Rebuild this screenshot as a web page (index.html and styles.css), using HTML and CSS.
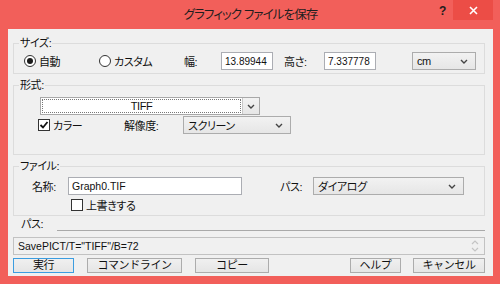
FILE: index.html
```html
<!DOCTYPE html>
<html lang="ja">
<head>
    <meta charset="UTF-8">
    <title>グラフィック ファイルを保存</title>
    <link rel="stylesheet" href="styles.css">
</head>
<body>
    <div class="window">
        <div class="titlebar">
            <div class="title-spacer"></div>
            <div class="title">グラフィック ファイルを保存</div>
            <div class="help">?</div>
            <div class="close">
                <svg width="9" height="9" viewBox="0 0 9 9"><path d="M1 1L8 8M8 1L1 8" stroke="#fff" stroke-width="1.6"/></svg>
            </div>
        </div>

        <div class="client">
            <fieldset class="group size">
                <legend>サイズ:</legend>
                <div class="row">
                    <label class="radio auto"><span class="radio-dot checked"></span>自動</label>
                    <label class="radio custom"><span class="radio-dot"></span>カスタム</label>
                    <span class="lbl lbl-w">幅:</span>
                    <input class="field num" type="text" value="13.89944">
                    <span class="lbl lbl-h">高さ:</span>
                    <input class="field num" type="text" value="7.337778">
                    <div class="combo unit"><span>cm</span><svg class="chev" width="8" height="5" viewBox="0 0 8 5"><path d="M1 1L4 4L7 1" fill="none" stroke="#444" stroke-width="1.4"/></svg></div>
                </div>
            </fieldset>

            <fieldset class="group format">
                <legend>形式:</legend>
                <div class="format-combo">
                    <div class="format-value"><span>TIFF</span></div>
                    <div class="format-btn"><svg width="8" height="5" viewBox="0 0 8 5"><path d="M1 1L4 4L7 1" fill="none" stroke="#444" stroke-width="1.4"/></svg></div>
                </div>
                <div class="row format-opts">
                    <label class="checkbox color">
                        <span class="check"><svg width="10" height="10" viewBox="0 0 10 10"><path d="M1.5 5L4 7.5L8.5 2" fill="none" stroke="#111" stroke-width="1.8"/></svg></span>カラー
                    </label>
                    <span class="lbl lbl-res">解像度:</span>
                    <div class="combo res"><span>スクリーン</span><svg class="chev" width="8" height="5" viewBox="0 0 8 5"><path d="M1 1L4 4L7 1" fill="none" stroke="#444" stroke-width="1.4"/></svg></div>
                </div>
            </fieldset>

            <fieldset class="group file">
                <legend>ファイル:</legend>
                <div class="row">
                    <span class="lbl lbl-name">名称:</span>
                    <input class="field name" type="text" value="Graph0.TIF">
                    <span class="lbl lbl-path">パス:</span>
                    <div class="combo path"><span>ダイアログ</span><svg class="chev" width="8" height="5" viewBox="0 0 8 5"><path d="M1 1L4 4L7 1" fill="none" stroke="#444" stroke-width="1.4"/></svg></div>
                </div>
                <label class="checkbox overwrite"><span class="check"></span>上書きする</label>
            </fieldset>

            <div class="path-row">
                <span class="path-label">パス:</span>
                <div class="path-line"></div>
            </div>

            <div class="cmdline">
                <span>SavePICT/T="TIFF"/B=72</span>
                <div class="spin">
                    <svg width="8" height="5" viewBox="0 0 8 5"><path d="M1 4L4 1L7 4" fill="none" stroke="#c4c4c4" stroke-width="1.2"/></svg>
                    <svg width="8" height="5" viewBox="0 0 8 5"><path d="M1 1L4 4L7 1" fill="none" stroke="#c4c4c4" stroke-width="1.2"/></svg>
                </div>
            </div>

            <div class="buttons">
                <button class="btn default">実行</button>
                <button class="btn cmd">コマンドライン</button>
                <button class="btn copy">コピー</button>
                <div class="spacer"></div>
                <button class="btn help-btn">ヘルプ</button>
                <button class="btn cancel">キャンセル</button>
            </div>
        </div>
    </div>
</body>
</html>
```

FILE: styles.css
```css
* {
    margin: 0;
    padding: 0;
    box-sizing: border-box;
}

body {
    font-family: 'Liberation Sans', 'Noto Sans CJK JP', sans-serif;
    font-size: 11px;
    letter-spacing: -0.4px;
    color: #111;
    font-feature-settings: "palt";
}

.window {
    width: 500px;
    height: 284px;
    background: #f25f5a;
    display: flex;
    flex-direction: column;
}

/* title bar */
.titlebar {
    height: 29px;
    display: flex;
}

.title-spacer { width: 62px; }

.title {
    flex: 1;
    text-align: center;
    font-size: 12.5px;
    letter-spacing: -0.9px;
    line-height: 30px;
    color: #1e1e1e;
}

.help {
    width: 8px;
    margin-top: 3px;
    margin-right: 6px;
    font-size: 12px;
    font-weight: bold;
    line-height: 16px;
    color: #1e1e1e;
}

.close {
    width: 40px;
    height: 20px;
    margin-right: 7px;
    background: #ec4d46;
    display: flex;
    align-items: center;
    justify-content: center;
}

/* client area */
.client {
    flex: 1;
    margin: 0 7px 8px 8px;
    background: #f0f0f0;
    padding: 7px 8px 0 5px;
}

.group {
    border: 1px solid #dcdcdc;
    padding: 0 0 3px 0;
    min-width: 0;
}

.group + .group { margin-top: 4px; }

.group legend {
    margin-left: 5px;
    padding: 0 1px;
    line-height: 14px;
}

.row {
    display: flex;
    align-items: center;
    height: 18px;
}

.lbl { white-space: nowrap; }

/* radios, checkboxes */
.radio, .checkbox {
    display: flex;
    align-items: center;
    gap: 3px;
    white-space: nowrap;
}

.radio-dot {
    width: 12px;
    height: 12px;
    border: 1px solid #333;
    border-radius: 50%;
    background: #fff;
    display: flex;
    align-items: center;
    justify-content: center;
}

.radio-dot.checked::after {
    content: '';
    width: 6px;
    height: 6px;
    border-radius: 50%;
    background: #1a1a1a;
}

.check {
    width: 12px;
    height: 12px;
    border: 1px solid #333;
    background: #fff;
    display: flex;
    align-items: center;
    justify-content: center;
}

/* text fields */
.field {
    height: 18px;
    border: 1px solid #abadb3;
    background: #fff;
    font-family: inherit;
    font-size: 10px;
    letter-spacing: 0;
    color: #111;
    padding: 0 2px;
    outline: none;
}

.num { width: 52px; padding-left: 3px; }

/* combo boxes */
.combo {
    height: 18px;
    border: 1px solid #acacac;
    background: linear-gradient(#f2f2f2, #e6e6e6);
    display: flex;
    align-items: center;
    justify-content: space-between;
    padding: 0 7px 0 4px;
    white-space: nowrap;
}

.chev { flex-shrink: 0; }

/* size group */
.size .row {
    margin-top: 2px;
    padding-left: 10px;
}

.radio.auto { width: 75px; }
.radio.custom { width: 85px; }
.lbl-w { width: 37px; }
.lbl-h { width: 40px; margin-left: 11px; }
.combo.unit { width: 64px; margin-left: 36px; }

/* format group */
.format { padding-bottom: 20px; }

.format-combo {
    display: flex;
    width: 220px;
    height: 18px;
    margin: 5px 0 0 26px;
    border: 1px solid #a8a8a8;
    background: #fff;
}

.format-value {
    flex: 1;
    padding: 1px;
    display: flex;
}

.format-value span {
    flex: 1;
    border: 1px dotted #777;
    text-align: center;
    line-height: 13px;
}

.format-btn {
    width: 17px;
    border-left: 1px solid #c8c8c8;
    background: linear-gradient(#f2f2f2, #e6e6e6);
    display: flex;
    align-items: center;
    justify-content: center;
}

.format-opts {
    margin-top: 1px;
    padding-left: 24px;
}

.checkbox.color { width: 86px; }
.lbl-res { width: 59px; }
.combo.res { width: 108px; }

/* file group */
.file { padding-bottom: 4px; }

.file .row {
    margin-top: 4px;
    padding-left: 18px;
}

.lbl-name { width: 36px; }
.field.name { width: 174px; padding-left: 3px; font-size: 10.5px; }
.lbl-path { width: 33px; margin-left: 38px; }
.combo.path { width: 151px; }

.checkbox.overwrite {
    margin: 4px 0 0 57px;
    height: 12px;
}

/* path line */
.path-row {
    display: flex;
    align-items: flex-end;
    height: 16px;
}

.path-label {
    width: 44px;
    padding-left: 8px;
    line-height: 15px;
}

.path-line {
    flex: 1;
    height: 1px;
    background: #a9a9a9;
    margin-bottom: 1px;
}

/* command line */
.cmdline {
    height: 18px;
    margin-top: 5px;
    border: 1px solid #c2c2c2;
    background: #f0f0f0;
    display: flex;
    align-items: center;
    justify-content: space-between;
    padding: 0 4px 0 4px;
    font-size: 10.5px;
    letter-spacing: 0;
}

.spin {
    display: flex;
    flex-direction: column;
    gap: 2px;
    margin-right: 1px;
}

.spin svg { display: block; }

/* buttons */
.buttons {
    display: flex;
    gap: 13px;
    margin-top: 3px;
}

.spacer { flex: 1; }

.btn {
    height: 15px;
    border: 1px solid #acacac;
    background: linear-gradient(#f0f0f0, #e5e5e5);
    font-family: inherit;
    font-size: 11px;
    letter-spacing: -0.4px;
    line-height: 13px;
    color: #111;
}

.btn.default { width: 61px; border-color: #3c9de0; }
.btn.cmd { width: 95px; }
.btn.copy { width: 74px; }
.btn.help-btn { width: 51px; }
.btn.cancel { width: 72px; }

.buttons .cancel { margin-left: -1px; }
```
